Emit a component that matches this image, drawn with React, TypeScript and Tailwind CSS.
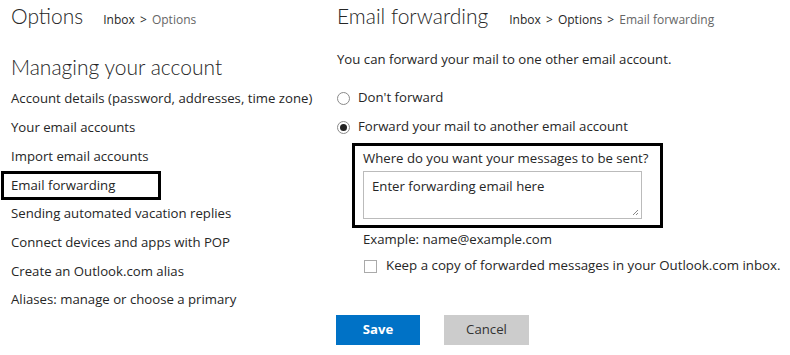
import React from 'react';

const menu = [
  'Account details (password, addresses, time zone)',
  'Your email accounts',
  'Import email accounts',
  'Email forwarding',
  'Sending automated vacation replies',
  'Connect devices and apps with POP',
  'Create an Outlook.com alias',
  'Aliases: manage or choose a primary',
];

const App = () => {
  return (
    <div className="w-[790px] h-[355px] bg-white text-[#262626] flex overflow-hidden font-['Open_Sans',sans-serif]">
      {/* Left column */}
      <div className="w-[337px] shrink-0 pl-[11px]">
        <div className="flex items-baseline h-[34px] pt-[1px]">
          <span className="text-[21px] font-light leading-[30px] font-['Lato',sans-serif]">Options</span>
          <span className="ml-[20px] text-[12px]">
            Inbox <span className="mx-[2px]">&gt;</span> <span className="text-[#666]">Options</span>
          </span>
        </div>
        <div className="mt-[18px] text-[21px] font-light leading-[30px] font-['Lato',sans-serif]">Managing your account</div>
        <ul className="mt-[3px] text-[13.2px]">
          {menu.map((item) =>
            item === 'Email forwarding' ? (
              <li key={item} className="h-[28.7px] flex items-center">
                <span className="-ml-[10px] pl-[7px] w-[160px] h-[29px] flex items-center border-[3px] border-black">
                  {item}
                </span>
              </li>
            ) : (
              <li key={item} className="h-[28.7px] flex items-center">
                {item}
              </li>
            )
          )}
        </ul>
      </div>

      {/* Right column */}
      <div className="flex-1">
        <div className="flex items-baseline h-[34px] pt-[1px]">
          <span className="text-[21px] font-light leading-[30px] font-['Lato',sans-serif]">Email forwarding</span>
          <span className="ml-[21px] text-[12px]">
            Inbox <span className="mx-[2px]">&gt;</span> Options <span className="mx-[2px]">&gt;</span>{' '}
            <span className="text-[#666]">Email forwarding</span>
          </span>
        </div>
        <p className="mt-[15px] text-[13.2px] leading-[20px]">You can forward your mail to one other email account.</p>

        <label className="mt-[19px] h-[20px] flex items-center text-[13.2px]">
          <span className="w-[13px] h-[13px] rounded-full border border-[#8a8a8a] mr-[8px]" />
          Don't forward
        </label>
        <label className="mt-[9px] h-[20px] flex items-center text-[13.2px]">
          <span className="w-[13px] h-[13px] rounded-full border border-[#8a8a8a] mr-[8px] flex items-center justify-center">
            <span className="w-[7px] h-[7px] rounded-full bg-[#222]" />
          </span>
          Forward your mail to another email account
        </label>

        <div className="mt-[6px] ml-[15px] w-[311px] h-[85px] border-[3px] border-black pl-[8px] pt-[2px]">
          <div className="text-[13.2px] leading-[20px]">Where do you want your messages to be sent?</div>
          <div className="relative mt-[3px] w-[279px] h-[48px] border border-[#bbb] pl-[8px] pt-[4px] text-[13.2px] leading-[20px]">
            Enter forwarding email here
            <svg className="absolute right-[2px] bottom-[2px]" width="8" height="8" viewBox="0 0 8 8">
              <path d="M7 2L2 7M7 5L5 7" stroke="#888" strokeWidth="1" />
            </svg>
          </div>
        </div>

        <div className="mt-[1px] ml-[26px] text-[13.2px] leading-[20px]">Example: name@example.com</div>
        <label className="mt-[7px] ml-[27px] h-[20px] flex items-center text-[13.3px]">
          <span className="w-[13px] h-[13px] border border-[#aaa] mr-[9px]" />
          Keep a copy of forwarded messages in your Outlook.com inbox.
        </label>

        <div className="mt-[39px] -ml-[1px] flex gap-[24px]">
          <button className="w-[84px] h-[30px] bg-[#0072c6] text-white text-[13.2px] font-bold">Save</button>
          <button className="w-[85px] h-[30px] bg-[#cccccc] text-[#333] text-[13.2px]">Cancel</button>
        </div>
      </div>
    </div>
  );
};

export default App;
